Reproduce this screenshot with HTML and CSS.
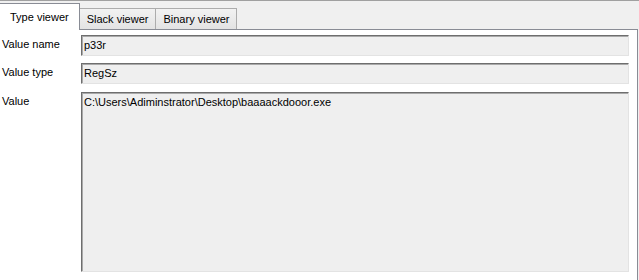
FILE: index.html
```html
<!DOCTYPE html>
<html>
<head>
<title>Value viewer</title>
<link rel="stylesheet" href="styles.css">
</head>
<body>
<div class="window">
  <div class="tabs">
    <div class="tab active">Type viewer</div>
    <div class="tab">Slack viewer</div>
    <div class="tab">Binary viewer</div>
  </div>
  <div class="panel">
    <div class="row">
      <span class="label">Value name</span>
      <div class="field">p33r</div>
    </div>
    <div class="row">
      <span class="label">Value type</span>
      <div class="field">RegSz</div>
    </div>
    <div class="row big">
      <span class="label">Value</span>
      <div class="field area">C:\Users\Adiminstrator\Desktop\baaaackdooor.exe</div>
    </div>
  </div>
</div>
</body>
</html>
```

FILE: styles.css
```css
body {
  margin: 0;
  background-color: #f0f0f0;
  font-family: "Liberation Sans", Arial, sans-serif;
  font-size: 11px;
  color: #000;
}

.window {
  height: 280px;
  border-top: 1px solid #a0a0a0;
  box-sizing: border-box;
  display: flex;
  flex-direction: column;
}

.tabs {
  display: flex;
  align-items: flex-end;
  height: 28px;
}

.tab {
  height: 20px;
  line-height: 20px;
  padding: 0 7px;
  border: 1px solid #acacac;
  border-bottom: none;
  background: linear-gradient(#f2f2f2, #e3e3e3);
  margin-left: -1px;
}

.tab.active {
  height: 26px;
  line-height: 26px;
  padding: 0 10px;
  margin-left: 0;
  margin-bottom: -1px;
  background: #fff;
  border-color: #898c95;
  border-left: none;
  position: relative;
  z-index: 1;
}

.panel {
  flex: 1;
  background-color: #fff;
  border-top: 1px solid #898c95;
  border-right: 1px solid #898c95;
  margin-right: 1px;
  padding: 5px 8px 0 2px;
  display: flex;
  flex-direction: column;
  gap: 7px;
}

.row {
  display: grid;
  grid-template-columns: 79px 1fr;
  align-items: start;
}

.row.big {
  margin-top: 1px;
}

.label {
  padding-top: 3px;
}

.field {
  height: 19px;
  line-height: 19px;
  padding-left: 2px;
  background-color: #efefef;
  border-top: 1px solid #6e6e6e;
  border-left: 1px solid #6e6e6e;
  border-right: 1px solid #e3e3e3;
  border-bottom: 1px solid #e3e3e3;
  box-shadow: inset 1px 1px 0 #a9a9a9;
}

.field.area {
  box-sizing: border-box;
  height: 180px;
  line-height: 16px;
  padding-top: 1px;
}
```
